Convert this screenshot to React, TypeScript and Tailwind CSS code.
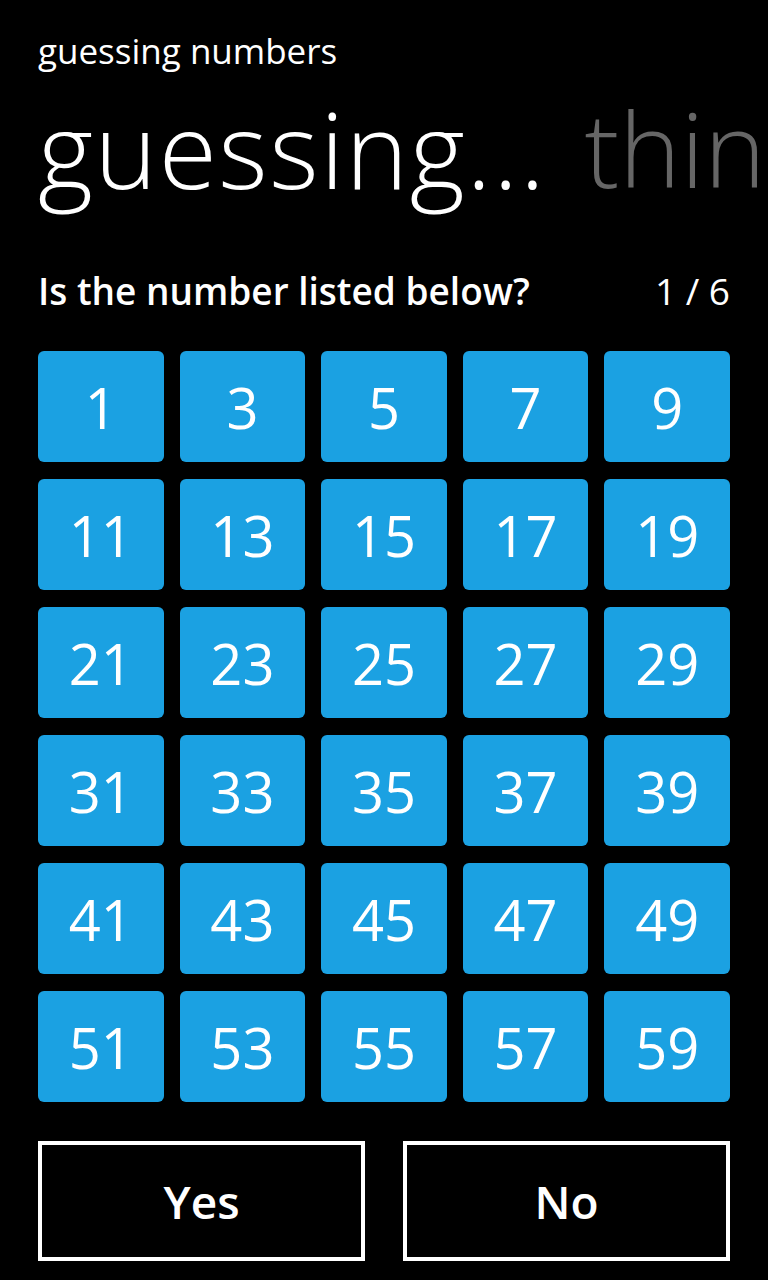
import React from "react";

const numbers = Array.from({ length: 30 }, (_, i) => 2 * i + 1);

export default function App() {
  return (
    <div
      className="w-[768px] h-[1280px] bg-black text-white overflow-hidden flex flex-col px-[38px]"
      style={{ fontFamily: '"Open Sans", "Noto Sans", sans-serif' }}
    >
      <div className="mt-[31px] text-[35px] leading-[40px] whitespace-nowrap">guessing numbers</div>
      <div className="mt-[17px] h-[120px] flex items-start whitespace-nowrap -mr-[38px]">
        <span className="text-[106px] leading-[120px] font-light tracking-[1.5px]">guessing...</span>
        <span className="ml-[38px] text-[104px] leading-[120px] font-light text-[#666666]">thin</span>
      </div>
      <div className="mt-[61px] h-[44px] flex items-center justify-between text-[37px] leading-[44px]">
        <span className="font-semibold">Is the number listed below?</span>
        <span>1 / 6</span>
      </div>
      <div className="mt-[38px] grid grid-cols-5 gap-x-[16px] gap-y-[17px]">
        {numbers.map((n) => (
          <div
            key={n}
            className="h-[111px] rounded-[6px] bg-[#1ba1e2] flex items-center justify-center text-[56px] leading-normal"
          >
            {n}
          </div>
        ))}
      </div>
      <div className="mt-[39px] flex justify-between">
        <button className="w-[327px] h-[120px] border-4 border-white bg-black text-white text-[46px] font-semibold flex items-center justify-center leading-normal">
          Yes
        </button>
        <button className="w-[327px] h-[120px] border-4 border-white bg-black text-white text-[46px] font-semibold flex items-center justify-center leading-normal">
          No
        </button>
      </div>
    </div>
  );
}
